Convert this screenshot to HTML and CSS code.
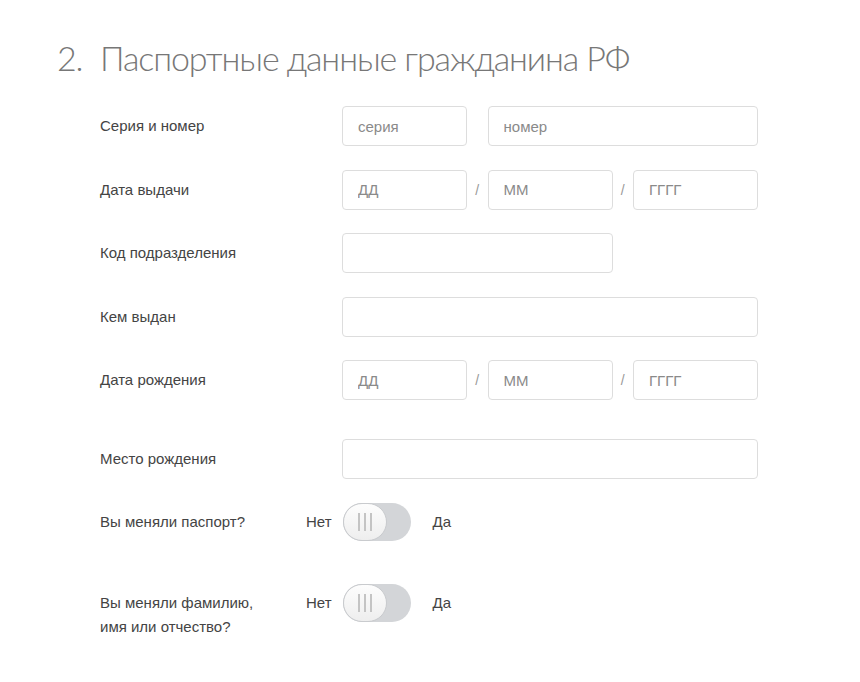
FILE: index.html
```html
<!DOCTYPE html>
<html lang="ru">
<head>
    <meta charset="UTF-8">
    <title>Паспортные данные</title>
    <link rel="stylesheet" href="styles.css">
</head>
<body>

<div class="section">
    <h2 class="section-title"><span class="num">2.</span>Паспортные данные гражданина РФ</h2>

    <div class="form-row">
        <div class="label">Серия и номер</div>
        <div class="fields">
            <input class="input w-small" type="text" placeholder="серия">
            <input class="input w-wide" type="text" placeholder="номер">
        </div>
    </div>

    <div class="form-row">
        <div class="label">Дата выдачи</div>
        <div class="fields">
            <input class="input w-small" type="text" placeholder="ДД">
            <span class="slash">/</span>
            <input class="input w-small" type="text" placeholder="ММ">
            <span class="slash">/</span>
            <input class="input w-small" type="text" placeholder="ГГГГ">
        </div>
    </div>

    <div class="form-row">
        <div class="label">Код подразделения</div>
        <div class="fields">
            <input class="input w-half" type="text">
        </div>
    </div>

    <div class="form-row">
        <div class="label">Кем выдан</div>
        <div class="fields">
            <input class="input w-full" type="text">
        </div>
    </div>

    <div class="form-row">
        <div class="label">Дата рождения</div>
        <div class="fields">
            <input class="input w-small" type="text" placeholder="ДД">
            <span class="slash">/</span>
            <input class="input w-small" type="text" placeholder="ММ">
            <span class="slash">/</span>
            <input class="input w-small" type="text" placeholder="ГГГГ">
        </div>
    </div>

    <div class="form-row spaced">
        <div class="label">Место рождения</div>
        <div class="fields">
            <input class="input w-full" type="text">
        </div>
    </div>

    <div class="switch-row">
        <div class="label">Вы меняли паспорт?</div>
        <span class="opt no">Нет</span>
        <div class="switch">
            <div class="knob"><i></i><i></i><i></i></div>
        </div>
        <span class="opt yes">Да</span>
    </div>

    <div class="switch-row spaced">
        <div class="label">Вы меняли фамилию,<br>имя или отчество?</div>
        <span class="opt no">Нет</span>
        <div class="switch">
            <div class="knob"><i></i><i></i><i></i></div>
        </div>
        <span class="opt yes">Да</span>
    </div>
</div>

</body>
</html>
```

FILE: styles.css
```css
body {
    margin: 0;
    background-color: #fff;
    font-family: 'Liberation Sans', Arial, sans-serif;
    color: #333;
}
.section {
    padding: 36px 0 40px 57px;
}
.section-title {
    margin: 0 0 26px 0;
    font-family: Lato, 'Liberation Sans', sans-serif;
    font-weight: 300;
    font-size: 34px;
    line-height: 44px;
    letter-spacing: -1.1px;
    color: #777;
    display: flex;
}
.section-title .num {
    width: 43px;
}
.form-row {
    display: flex;
    align-items: center;
    padding-left: 43px;
    margin-bottom: 23.5px;
}
.form-row.spaced {
    margin-top: 39px;
}
.label {
    width: 242px;
    font-size: 15px;
    line-height: 24px;
    color: #444;
    flex-shrink: 0;
}
.fields {
    display: flex;
    align-items: center;
    gap: 20.5px;
}
.input {
    box-sizing: border-box;
    height: 40px;
    border: 1px solid #ddd;
    border-radius: 4px;
    padding: 0 15px;
    font-family: 'Liberation Sans', Arial, sans-serif;
    font-size: 15px;
    color: #333;
    background: #fff;
    outline: none;
}
.input::placeholder {
    color: #8a8a8a;
}
.w-small { width: 125px; }
.w-wide { width: 270.5px; }
.w-half { width: 271px; }
.w-full { width: 416px; }
.fields .slash {
    width: 0;
    margin: 0 -10.25px;
    display: flex;
    justify-content: center;
    font-size: 14px;
    color: #999;
}
.switch-row {
    display: flex;
    align-items: flex-start;
    padding-left: 43px;
}
.switch-row.spaced {
    margin-top: 43px;
}
.switch-row .label {
    width: 206px;
    padding-top: 7px;
}
.opt {
    font-size: 15px;
    line-height: 24px;
    padding-top: 7px;
    color: #444;
}
.opt.no {
    margin-right: 11px;
}
.opt.yes {
    margin-left: 22px;
}
.switch {
    position: relative;
    width: 68px;
    height: 38px;
    border-radius: 19px;
    background-color: #d3d5d8;
}
.knob {
    position: absolute;
    left: 0;
    top: 0;
    box-sizing: border-box;
    width: 44px;
    height: 38px;
    border-radius: 19px;
    border: 1px solid #c9cbce;
    background: linear-gradient(#fdfdfd, #eeeeee);
    display: flex;
    justify-content: center;
    align-items: center;
    gap: 4px;
}
.knob i {
    width: 2px;
    height: 18px;
    background-color: #c4c4c4;
}
```
